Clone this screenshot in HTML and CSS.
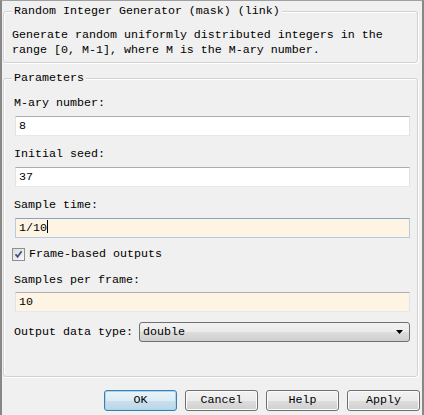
FILE: index.html
```html
<!DOCTYPE html>
<html>
<head>
<meta charset="utf-8">
<link rel="stylesheet" href="styles.css">
</head>
<body>
<div class="window">
  <fieldset class="group desc">
    <legend class="legend">Random Integer Generator (mask) (link)</legend>
    <p class="desc-text">Generate random uniformly distributed integers in the<br>range [0, M-1], where M is the M-ary number.</p>
  </fieldset>
  <fieldset class="group params">
    <legend class="legend">Parameters</legend>
    <div class="label">M-ary number:</div>
    <div class="field">8</div>
    <div class="label">Initial seed:</div>
    <div class="field">37</div>
    <div class="label">Sample time:</div>
    <div class="field tuned focused">1/10<span class="caret"></span></div>
    <div class="check-row">
      <span class="checkbox">
        <svg width="11" height="11" viewBox="0 0 11 11"><path d="M2.5 5.2 L4.6 7.8 L8.6 2.2" fill="none" stroke="#3e5487" stroke-width="1.8"/></svg>
      </span>
      <span>Frame-based outputs</span>
    </div>
    <div class="label label-spf">Samples per frame:</div>
    <div class="field tuned">10</div>
    <div class="combo-row">
      <span>Output data type:</span>
      <div class="combo">
        <span>double</span>
        <svg class="arrow" width="8" height="4" viewBox="0 0 8 4"><path d="M0 0 H7 L3.5 4 Z" fill="#000"/></svg>
      </div>
    </div>
  </fieldset>
  <div class="buttons">
    <div class="btn default">OK</div>
    <div class="btn">Cancel</div>
    <div class="btn">Help</div>
    <div class="btn">Apply</div>
  </div>
</div>
</body>
</html>
```
FILE: styles.css
```css
html, body {
  margin: 0;
  padding: 0;
  background: #f0f0f0;
}

body {
  font-family: "Liberation Mono", "DejaVu Sans Mono", monospace;
  font-size: 11.67px;
  line-height: 15px;
  color: #000;
}

.window {
  box-sizing: border-box;
  width: 424px;
  height: 415px;
  border-top: 1px solid #a0a0a0;
  border-left: 2px solid #878787;
  border-right: 2px solid #878787;
  padding: 3px 4px 0 1px;
  overflow: hidden;
}

.group {
  margin: 0;
  border: 1px solid #d2d2d2;
  border-radius: 3px;
  box-shadow: inset 1px 1px 0 #ffffff, 1px 1px 0 #ffffff;
  min-width: 0;
}

.legend {
  padding: 0 2px;
  line-height: 15px;
  background: #f0f0f0;
}

.desc {
  padding: 9px 8px 4px 8px;
}

.desc-text {
  margin: 0;
  white-space: nowrap;
}

.params {
  margin-top: 8px;
  padding: 10px 7px 34px 10px;
  display: flex;
  flex-direction: column;
}

.params .legend {
  margin-left: -2px;
}

.label {
  line-height: 15px;
  margin-bottom: 5px;
}

.label-spf {
  margin-bottom: 4px;
}

.field {
  box-sizing: border-box;
  height: 20px;
  margin: 0 0 11px 1px;
  padding: 0 3px;
  line-height: 18px;
  background: #ffffff;
  border: 1px solid #dbdfe6;
  border-top-color: #abadb3;
  border-left-color: #e2e3ea;
  border-right-color: #e2e3ea;
  border-bottom-color: #e3e9ef;
}

.field.tuned {
  background: #fdf4e4;
}

.field.focused {
  border-color: #b5cde4;
  border-top-color: #8aa4c0;
  margin-bottom: 9px;
}

.caret {
  display: inline-block;
  width: 1px;
  height: 13px;
  background: #000;
  vertical-align: -2px;
}

.check-row {
  display: flex;
  align-items: center;
  gap: 4px;
  height: 15px;
  margin: 0 0 11px -2px;
}

.checkbox {
  box-sizing: border-box;
  width: 13px;
  height: 13px;
  border: 1px solid #8e8f8f;
  background: linear-gradient(135deg, #dcdcdc, #f8f8f8);
  display: flex;
  align-items: center;
  justify-content: center;
}

.combo-row {
  display: flex;
  align-items: center;
  gap: 6px;
  margin-top: -1px;
}

.combo {
  box-sizing: border-box;
  flex: 1;
  height: 20px;
  display: flex;
  align-items: center;
  justify-content: space-between;
  padding: 0 5px 0 3px;
  border: 1px solid #707070;
  border-radius: 3px;
  background: linear-gradient(#f2f2f2 0%, #ebebeb 50%, #dddddd 51%, #cfcfcf 100%);
}

.arrow {
  display: block;
}

.buttons {
  display: flex;
  justify-content: flex-end;
  gap: 8px;
  margin: 13px -2px 0 0;
}

.btn {
  box-sizing: border-box;
  width: 73px;
  height: 21px;
  display: flex;
  align-items: center;
  justify-content: center;
  border: 1px solid #707070;
  border-radius: 3px;
  background: linear-gradient(#f2f2f2 0%, #ebebeb 50%, #dddddd 51%, #cfcfcf 100%);
  box-shadow: inset 0 0 0 1px #fbfbfb;
}

.btn.default {
  border-color: #3c7fb1;
  background: linear-gradient(#e5f4fc 0%, #c4e5f6 50%, #98d1ef 51%, #68b3db 100%);
  background: linear-gradient(#eaf4fa 0%, #dcebf4 50%, #c9dfec 51%, #bcd6e6 100%);
  box-shadow: inset 0 0 0 1px #a9d4ee;
}
```
